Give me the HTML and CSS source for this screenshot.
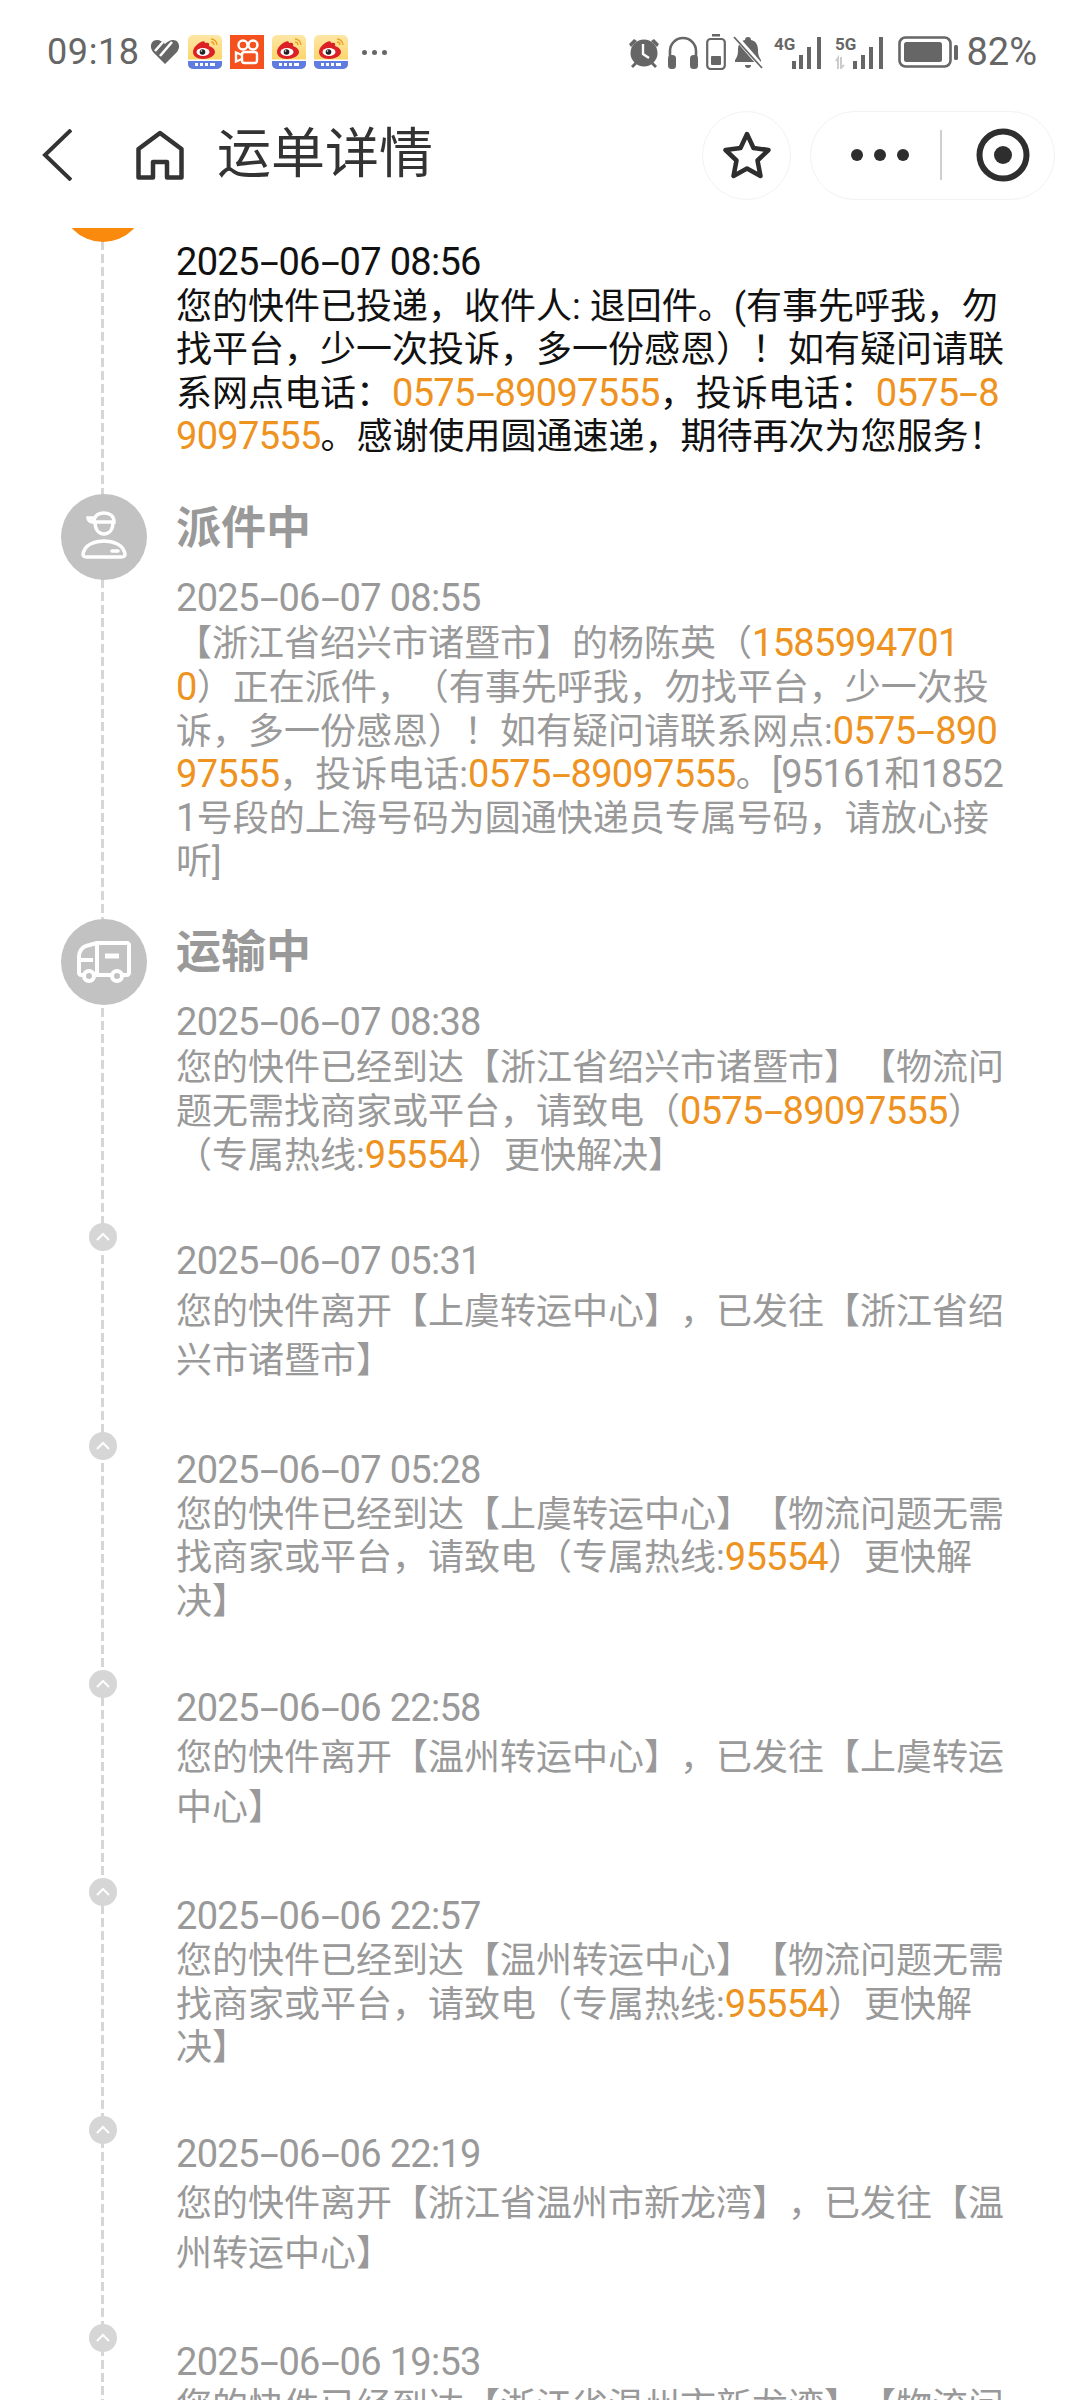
FILE: index.html
```html
<!DOCTYPE html>
<html lang="zh-CN">
<head>
    <meta charset="UTF-8">
    <meta name="viewport" content="width=device-width, initial-scale=1.0">
    <title>运单详情</title>
    <link rel="stylesheet" href="styles.css">
</head>
<body>

    <!-- shared app icon -->
    <svg class="defs" width="0" height="0">
        <defs>
            <linearGradient id="wbSky" x1="0" y1="0" x2="0" y2="1">
                <stop offset="0" stop-color="#fde7a6"/>
                <stop offset="1" stop-color="#fbcf55"/>
            </linearGradient>
            <symbol id="weibo" viewBox="0 0 34 34">
                <rect width="34" height="34" rx="5" fill="url(#wbSky)"/>
                <path d="M0 25h34v4a5 5 0 0 1-5 5H5a5 5 0 0 1-5-5z" fill="#5f7de0"/>
                <path d="M0 24.500h34v1.500H0z" fill="#fff"/>
                <path d="M7 28h3v3H7zM12 28h3v3h-3zM17 28h3v3h-3zM22 28h5v3h-5z" fill="#fff"/>
                <path d="M5 17c0-4 4-8 8-10 2-1 4-1 4 1 3-1 5 0 4 3 3 1 6 3 6 6 0 4-6 7-12 7S5 21 5 17z" fill="#dc2126"/>
                <ellipse cx="15" cy="17" rx="6.500" ry="4" fill="#fff"/>
                <circle cx="14.500" cy="17" r="2.800" fill="#222"/>
                <circle cx="13.500" cy="16" r="0.800" fill="#fff"/>
                <path d="M23 4a6 6 0 0 1 6 6M23 7a3 3 0 0 1 3 3" fill="none" stroke="#eda21f" stroke-width="1.400"/>
            </symbol>
        </defs>
    </svg>

    <!-- Status bar -->
    <div class="status-bar">
        <div class="status-left">
            <span class="clock">09:18</span>
            <svg class="ic-heart" width="30" height="26" viewBox="0 0 30 26">
                <path d="M15 25L3 13C-1 8 1 1 7 1c3 0 6 2 8 4 2-2 5-4 8-4 6 0 8 7 4 12z" fill="#666"/>
                <path d="M13 3L5 12M22 3L10 17" stroke="#fff" stroke-width="2.600"/>
            </svg>
            <div class="app-icons">
                <svg width="34" height="34"><use href="#weibo"/></svg>
                <svg width="34" height="34" viewBox="0 0 34 34">
                    <rect width="34" height="34" fill="#f4511e"/>
                    <g fill="none" stroke="#fff" stroke-width="2.400">
                        <circle cx="13" cy="10" r="4.500"/>
                        <circle cx="23" cy="10" r="4.500"/>
                        <rect x="12" y="17" width="15" height="11" rx="2.500"/>
                        <path d="M12 20l-6-2.500v9l6-2.500"/>
                    </g>
                </svg>
                <svg width="34" height="34"><use href="#weibo"/></svg>
                <svg width="34" height="34"><use href="#weibo"/></svg>
            </div>
            <div class="more-dots"><i></i><i></i><i></i></div>
        </div>
        <div class="status-right">
            <svg width="32" height="34" viewBox="0 0 32 34">
                <path d="M1 9l5-5 3 2-6 6zM31 9l-5-5-3 2 6 6z" fill="#666"/>
                <circle cx="16" cy="18" r="13.500" fill="#666"/>
                <path d="M15 9v10l6 4" fill="none" stroke="#fff" stroke-width="2.400"/>
                <path d="M3 31l4-4 2 2-4 4zM29 31l-4-4-2 2 4 4z" fill="#666"/>
            </svg>
            <svg width="32" height="34" viewBox="0 0 32 34">
                <path d="M3 22V16a13 13 0 0 1 26 0v6" fill="none" stroke="#666" stroke-width="2.600"/>
                <rect x="1" y="20" width="8" height="14" rx="3.500" fill="#666"/>
                <rect x="23" y="20" width="8" height="14" rx="3.500" fill="#666"/>
            </svg>
            <svg width="20" height="36" viewBox="0 0 20 36">
                <rect x="6" y="0" width="8" height="2.500" fill="#666"/>
                <rect x="1.200" y="5" width="17.600" height="30" rx="3.500" fill="none" stroke="#666" stroke-width="2.200"/>
                <rect x="5" y="22" width="10" height="9" rx="1" fill="#666"/>
            </svg>
            <svg width="30" height="34" viewBox="0 0 30 34">
                <path d="M15 2c2 0 3 1 3 3 5 1 7 5 7 10 0 5 1 7 3 10v2H2v-2c2-3 3-5 3-10 0-5 2-9 7-10 0-2 1-3 3-3z" fill="#666"/>
                <path d="M12 30a3 3 0 0 0 6 0z" fill="#666"/>
                <path d="M2 1l27 31" stroke="#fff" stroke-width="5"/>
                <path d="M1 2l28 31" stroke="#666" stroke-width="1.800"/>
            </svg>
            <svg class="net-4g" width="50" height="34" viewBox="0 0 50 34">
                <text x="0" y="15" class="net-label">4G</text>
                <g fill="#666"><rect x="18" y="26" width="4" height="8"/><rect x="25" y="20" width="4" height="14"/><rect x="33" y="12" width="4" height="22"/><rect x="43" y="2" width="4" height="32"/></g>
            </svg>
            <svg class="net-5g" width="51" height="34" viewBox="0 0 51 34">
                <text x="0" y="15" class="net-label">5G</text>
                <path d="M3 34V23l-2 3M6 22v11l3-3" fill="none" stroke="#ccc" stroke-width="2"/>
                <g fill="#666"><rect x="18" y="26" width="4" height="8"/><rect x="26" y="20" width="4" height="14"/><rect x="34" y="12" width="4" height="22"/><rect x="44" y="2" width="4" height="32"/></g>
            </svg>
            <svg class="ic-battery" width="60" height="32" viewBox="0 0 60 32">
                <rect x="1.500" y="1.500" width="51" height="29" rx="6" fill="none" stroke="#666" stroke-width="2.600"/>
                <rect x="6" y="6" width="38" height="20" rx="2.500" fill="#666"/>
                <rect x="56" y="9" width="4" height="15" rx="1.500" fill="#666"/>
            </svg>
            <span class="battery-pct">82%</span>
        </div>
    </div>

    <!-- Title bar -->
    <div class="nav-bar">
        <svg class="nav-back" width="30" height="52" viewBox="0 0 30 52"><path d="M29 1L3 26l26 25" fill="none" stroke="#333" stroke-width="4"/></svg>
        <svg class="nav-home" width="48" height="50" viewBox="0 0 48 50"><path d="M2.500 47.500V19L24 3l21.500 16v28.500H31V32H17v15.500z" fill="none" stroke="#333" stroke-width="4.500" stroke-linejoin="round"/></svg>
        <h1 class="nav-title">运单详情</h1>
        <div class="fav-button">
            <svg width="50" height="50" viewBox="0 0 50 50"><path d="M25 4l6.500 14 15 2-11 10.500L38.500 46 25 38.500 11.500 46l3-15.500L3.500 20l15-2z" fill="none" stroke="#2e2e2e" stroke-width="4.500" stroke-linejoin="round"/></svg>
        </div>
        <div class="capsule">
            <div class="capsule-dots"><i></i><i></i><i></i></div>
            <span class="capsule-divider"></span>
            <svg width="54" height="54" viewBox="0 0 54 54"><circle cx="27" cy="27" r="23.500" fill="none" stroke="#2e2e2e" stroke-width="6"/><circle cx="27" cy="27" r="9" fill="#2e2e2e"/></svg>
        </div>
    </div>

    <!-- Tracking timeline -->
    <div class="timeline">

        <div class="step step-current">
            <div class="mark"><span class="node node-orange"></span></div>
            <div class="body">
                <div class="date">2025<i>-</i>06<i>-</i>07 08:56</div>
                <p class="text">您的快件已投递，收件人: 退回件。(有事先呼我，勿<br>找平台，少一次投诉，多一份感恩）！如有疑问请联<br>系网点电话：<a>0575<i>-</i>89097555</a>，投诉电话：<a>0575<i>-</i>8<br>9097555</a>。感谢使用圆通速递，期待再次为您服务！</p>
            </div>
        </div>

        <div class="step step-dispatch">
            <div class="mark">
                <span class="node">
                    <svg width="86" height="86" viewBox="0 0 86 86" fill="none" stroke="#fff" stroke-width="3.500">
                        <path d="M33 28c0-6 4-9 10-9s10 3 10 9z"/>
                        <path d="M33 24h-6c0 2 2 4 6 4"/>
                        <path d="M34 28c0 8 4 12 9 12s9-4 9-12"/>
                        <path d="M26 63c-4 0-5-2-3-6 2-6 10-10 20-10s18 4 20 10c2 4 1 6-3 6z" stroke-linejoin="round"/>
                        <path d="M51 57h6" stroke-linecap="round"/>
                    </svg>
                </span>
            </div>
            <div class="body">
                <h2 class="title">派件中</h2>
                <div class="date date-under">2025<i>-</i>06<i>-</i>07 08:55</div>
                <p class="text">【浙江省绍兴市诸暨市】的杨陈英（<a>1585994701<br>0</a>）正在派件，（有事先呼我，勿找平台，少一次投<br>诉，多一份感恩）！如有疑问请联系网点:<a>0575<i>-</i>890<br>97555</a>，投诉电话:<a>0575<i>-</i>89097555</a>。<span class="num">[95161</span>和<span class="num">1852<br>1</span>号段的上海号码为圆通快递员专属号码，请放心接<br>听]</p>
            </div>
        </div>

        <div class="step step-section">
            <div class="mark">
                <span class="node">
                    <svg width="86" height="86" viewBox="0 0 86 86" fill="none" stroke="#fff" stroke-width="4" stroke-linejoin="round">
                        <path d="M36 56V24h30c1 0 2 1 2 2v28c0 1-1 2-2 2h-4M50 56H35"/>
                        <path d="M23 56h-3c-1 0-2-1-2-2V37c0-4 3-9 7-10l11-3"/>
                        <path d="M18 41h14"/>
                        <path d="M44 37h14" stroke-width="5"/>
                        <circle cx="28" cy="57" r="5"/>
                        <circle cx="56" cy="57" r="5"/>
                    </svg>
                </span>
            </div>
            <div class="body">
                <h2 class="title">运输中</h2>
                <div class="date date-under">2025<i>-</i>06<i>-</i>07 08:38</div>
                <p class="text">您的快件已经到达【浙江省绍兴市诸暨市】【物流问<br>题无需找商家或平台，请致电（<a>0575<i>-</i>89097555</a>）<br>（专属热线:<a>95554</a>）更快解决】</p>
            </div>
        </div>

        <div class="step step-small">
            <div class="mark"><span class="node node-small"><svg width="28" height="28" viewBox="0 0 28 28"><path d="M8 17l6-6 6 6" fill="none" stroke="#fff" stroke-width="2"/></svg></span></div>
            <div class="body">
                <div class="date">2025<i>-</i>06<i>-</i>07 05:31</div>
                <p class="text text-loose">您的快件离开【上虞转运中心】，已发往【浙江省绍<br>兴市诸暨市】</p>
            </div>
        </div>

        <div class="step step-small">
            <div class="mark"><span class="node node-small"><svg width="28" height="28" viewBox="0 0 28 28"><path d="M8 17l6-6 6 6" fill="none" stroke="#fff" stroke-width="2"/></svg></span></div>
            <div class="body">
                <div class="date">2025<i>-</i>06<i>-</i>07 05:28</div>
                <p class="text">您的快件已经到达【上虞转运中心】【物流问题无需<br>找商家或平台，请致电（专属热线:<a>95554</a>）更快解<br>决】</p>
            </div>
        </div>

        <div class="step step-small">
            <div class="mark"><span class="node node-small"><svg width="28" height="28" viewBox="0 0 28 28"><path d="M8 17l6-6 6 6" fill="none" stroke="#fff" stroke-width="2"/></svg></span></div>
            <div class="body">
                <div class="date">2025<i>-</i>06<i>-</i>06 22:58</div>
                <p class="text text-loose">您的快件离开【温州转运中心】，已发往【上虞转运<br>中心】</p>
            </div>
        </div>

        <div class="step step-small">
            <div class="mark"><span class="node node-small"><svg width="28" height="28" viewBox="0 0 28 28"><path d="M8 17l6-6 6 6" fill="none" stroke="#fff" stroke-width="2"/></svg></span></div>
            <div class="body">
                <div class="date">2025<i>-</i>06<i>-</i>06 22:57</div>
                <p class="text">您的快件已经到达【温州转运中心】【物流问题无需<br>找商家或平台，请致电（专属热线:<a>95554</a>）更快解<br>决】</p>
            </div>
        </div>

        <div class="step step-small">
            <div class="mark"><span class="node node-small"><svg width="28" height="28" viewBox="0 0 28 28"><path d="M8 17l6-6 6 6" fill="none" stroke="#fff" stroke-width="2"/></svg></span></div>
            <div class="body">
                <div class="date">2025<i>-</i>06<i>-</i>06 22:19</div>
                <p class="text text-loose">您的快件离开【浙江省温州市新龙湾】，已发往【温<br>州转运中心】</p>
            </div>
        </div>

        <div class="step step-small">
            <div class="mark"><span class="node node-small"><svg width="28" height="28" viewBox="0 0 28 28"><path d="M8 17l6-6 6 6" fill="none" stroke="#fff" stroke-width="2"/></svg></span></div>
            <div class="body">
                <div class="date">2025<i>-</i>06<i>-</i>06 19:53</div>
                <p class="text">您的快件已经到达【浙江省温州市新龙湾】【物流问</p>
            </div>
        </div>

    </div>

</body>
</html>
```

FILE: styles.css
```css
html, body {
    margin: 0;
    height: 2400px;
    overflow: hidden;
}

body {
    display: flex;
    flex-direction: column;
    background-color: #ffffff;
    font-family: Roboto, "Noto Sans CJK SC", sans-serif;
    text-spacing-trim: space-all;
}

.defs {
    position: absolute;
}

/* Status bar */
.status-bar {
    height: 104px;
    flex: none;
    display: flex;
    justify-content: space-between;
    align-items: center;
    padding: 0 43px 0 47px;
    color: #666;
}

.status-left, .status-right {
    display: flex;
    align-items: center;
}

.clock {
    font-size: 36px;
    letter-spacing: 0.6px;
    width: 103px;
}

.app-icons {
    display: flex;
    gap: 8px;
    margin-left: 8px;
}

.more-dots {
    display: flex;
    gap: 5px;
    margin-left: 14px;
}

.more-dots i {
    width: 5px;
    height: 5px;
    border-radius: 50%;
    background-color: #666;
}

.status-right {
    gap: 7px;
}

.net-label {
    font-size: 17px;
    font-weight: 700;
    fill: #666;
}

.net-4g {
    margin-left: 4px;
}

.net-5g {
    margin-left: 4px;
}

.ic-battery {
    margin-left: 5px;
}

.battery-pct {
    font-size: 38px;
    margin-left: 1px;
}

/* Title bar */
.nav-bar {
    height: 102px;
    flex: none;
    display: flex;
    align-items: center;
    padding: 0 25px 22px 42px;
}

.nav-home {
    margin-left: 64px;
}

.nav-title {
    margin: 0 0 0 33px;
    font-size: 54px;
    font-weight: 400;
    color: #333;
    line-height: 1;
}

.fav-button {
    margin-left: auto;
    width: 89px;
    height: 89px;
    box-sizing: border-box;
    border: 1.5px solid #f2f2f2;
    border-radius: 50%;
    display: flex;
    align-items: center;
    justify-content: center;
}

.capsule {
    margin-left: 19px;
    width: 245px;
    height: 89px;
    box-sizing: border-box;
    border: 1.5px solid #f2f2f2;
    border-radius: 45px;
    display: flex;
    align-items: center;
    padding-left: 40px;
}

.capsule-dots {
    display: flex;
    gap: 11px;
}

.capsule-dots i {
    width: 12px;
    height: 12px;
    border-radius: 50%;
    background-color: #2e2e2e;
}

.capsule-divider {
    width: 1.5px;
    height: 50px;
    background-color: #cfcfcf;
    margin: 0 34px 0 31px;
}

/* Timeline */
.timeline {
    position: relative;
    flex: 1;
    min-height: 0;
    overflow: hidden;
}

.timeline::before {
    content: "";
    position: absolute;
    left: 101px;
    top: 0;
    bottom: 0;
    width: 3px;
    background: repeating-linear-gradient(to bottom, #d6d6d6 0, #d6d6d6 9px, transparent 9px, transparent 13px);
}

.step {
    position: relative;
    display: grid;
    grid-template-columns: 176px 1fr;
}

.step-current { padding-bottom: 34px; }
.step-dispatch { padding-bottom: 34.5px; }
.step-section { padding-bottom: 45px; }
.step-small { padding-bottom: 45px; }

.mark {
    padding-left: 61px;
}

.node {
    display: block;
    width: 86px;
    height: 86px;
    border-radius: 50%;
    background-color: #c2c2c2;
}

.node svg {
    display: block;
}

.node-orange {
    width: 84px;
    height: 84px;
    margin-top: -70px;
    background-color: #f98a0d;
}

.node-small {
    width: 28px;
    height: 28px;
    margin-left: 28px;
    background-color: #d6d6d6;
}

.step-current .body { padding-top: 11.5px; }
.step-small .body { padding-top: 16px; }

.title {
    margin: 13px 0 0;
    font-size: 45px;
    font-weight: 700;
    line-height: 44px;
    color: #999;
}

.step-section .title {
    margin-top: 11.5px;
}

.date {
    font-size: 38px;
    line-height: 44px;
    letter-spacing: -0.7px;
    color: #999;
}

.date-under {
    margin-top: 25px;
}

.step-section .date-under {
    margin-top: 25px;
}

.text {
    margin: 2px 0 0;
    font-size: 36px;
    line-height: 43.6px;
    color: #999;
    white-space: nowrap;
}

.step-dispatch .text {
    margin-top: 3.5px;
}

.step-section .text {
    margin-top: 3.5px;
}

.text-loose {
    margin-top: 4.500px;
    line-height: 49.5px;
}

/* latin digits run larger than the CJK around them */
.text a, .num {
    font-size: 38px;
    line-height: 0;
    letter-spacing: -0.7px;
}

.text a {
    color: #ee9220;
}

.date i, .text a i {
    display: inline-block;
    font-style: normal;
    margin: 0 5px;
    transform: scaleX(1.8);
}

.step-current .date, .step-current .text {
    color: #111;
}
```
